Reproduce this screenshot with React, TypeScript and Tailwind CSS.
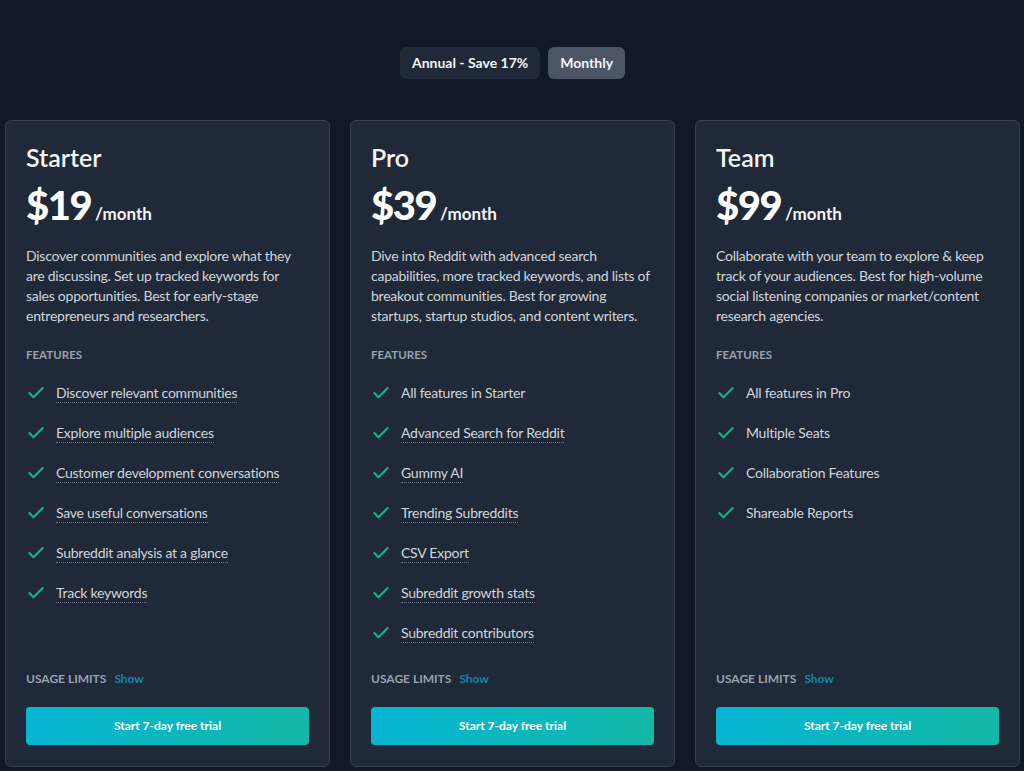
import { Check } from "lucide-react";

interface Plan {
  name: string;
  price: string;
  description: string;
  features: { label: string; hint: boolean }[];
}

const plans: Plan[] = [
  {
    name: "Starter",
    price: "$19",
    description:
      "Discover communities and explore what they are discussing. Set up tracked keywords for sales opportunities. Best for early-stage entrepreneurs and researchers.",
    features: [
      { label: "Discover relevant communities", hint: true },
      { label: "Explore multiple audiences", hint: true },
      { label: "Customer development conversations", hint: true },
      { label: "Save useful conversations", hint: true },
      { label: "Subreddit analysis at a glance", hint: true },
      { label: "Track keywords", hint: true },
    ],
  },
  {
    name: "Pro",
    price: "$39",
    description:
      "Dive into Reddit with advanced search capabilities, more tracked keywords, and lists of breakout communities. Best for growing startups, startup studios, and content writers.",
    features: [
      { label: "All features in Starter", hint: false },
      { label: "Advanced Search for Reddit", hint: true },
      { label: "Gummy AI", hint: true },
      { label: "Trending Subreddits", hint: true },
      { label: "CSV Export", hint: true },
      { label: "Subreddit growth stats", hint: true },
      { label: "Subreddit contributors", hint: true },
    ],
  },
  {
    name: "Team",
    price: "$99",
    description:
      "Collaborate with your team to explore & keep track of your audiences. Best for high-volume social listening companies or market/content research agencies.",
    features: [
      { label: "All features in Pro", hint: false },
      { label: "Multiple Seats", hint: false },
      { label: "Collaboration Features", hint: false },
      { label: "Shareable Reports", hint: false },
    ],
  },
];

function PlanCard({ plan }: { plan: Plan }) {
  return (
    <div className="flex flex-col rounded-md border border-[#364152] bg-[#1f2937] p-5 pb-[21px]">
      <h2 className="text-[25px] leading-8 font-semibold text-gray-100">{plan.name}</h2>
      <div className="mt-3 flex h-10 items-baseline">
        <span className="text-[40px] leading-none font-black tracking-[-1.5px] text-white">
          {plan.price}
        </span>
        <span className="ml-1 text-[17px] leading-none font-bold text-gray-100">/month</span>
      </div>
      <p className="mt-[21px] text-sm leading-5 tracking-[-0.25px] text-gray-300">
        {plan.description}
      </p>
      <p className="mt-[21px] text-[11.5px] leading-4 font-bold uppercase text-gray-400">Features</p>
      <ul className="mt-5 flex flex-1 flex-col gap-5">
        {plan.features.map((f) => (
          <li
            key={f.label}
            className="flex items-center gap-2.5 text-sm leading-5 tracking-[-0.25px] text-gray-300"
          >
            <Check className="h-5 w-5 text-[#10b981]" strokeWidth={2.5} />
            <span className={f.hint ? "border-b border-dotted border-gray-500 leading-[18px]" : ""}>
              {f.label}
            </span>
          </li>
        ))}
      </ul>
      <div className="mt-7 flex items-center text-xs leading-4">
        <span className="font-bold uppercase text-gray-400">Usage limits</span>
        <span className="ml-2 font-semibold text-[#0891b2]">Show</span>
      </div>
      <button className="mt-5 h-[38px] w-full rounded-sm bg-gradient-to-r from-[#06b6d4] to-[#14b8a6] text-xs font-bold text-white">
        Start 7-day free trial
      </button>
    </div>
  );
}

export default function App() {
  return (
    <div
      className="min-h-[771px] bg-[#111827] pt-[47px] pr-[4px] pb-1 pl-[5px]"
      style={{ fontFamily: 'Lato, "Noto Sans", sans-serif' }}
    >
      <div className="flex justify-center gap-2">
        <button className="h-8 rounded-md bg-[#1f2937] px-3 text-sm font-bold text-gray-100">
          Annual - Save 17%
        </button>
        <button className="h-8 rounded-md bg-[#4b5563] px-3 text-sm font-bold text-gray-100">
          Monthly
        </button>
      </div>
      <div className="mt-[41px] grid grid-cols-3 gap-5">
        {plans.map((p) => (
          <PlanCard key={p.name} plan={p} />
        ))}
      </div>
    </div>
  );
}
